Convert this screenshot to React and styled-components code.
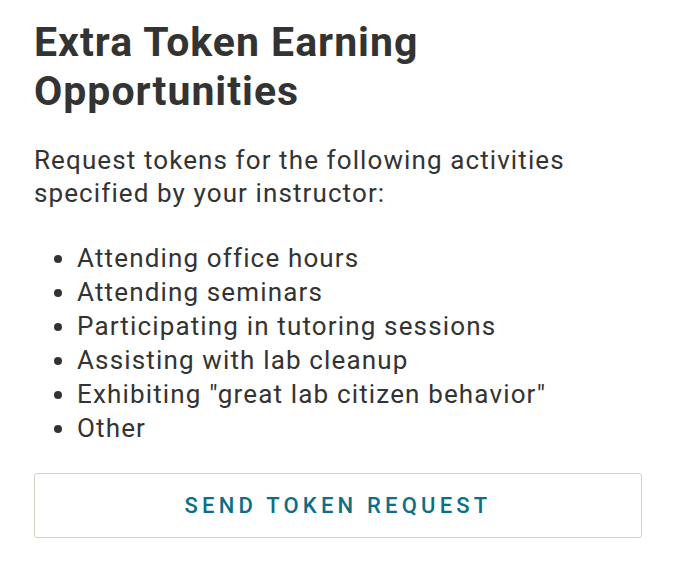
import React from "react"
import styled, { createGlobalStyle } from "styled-components"

const GlobalStyle = createGlobalStyle`
  body {
    margin: 0;
    background: #fff;
    font-family: Roboto, "Liberation Sans", sans-serif;
    color: #333;
  }
`

const Panel = styled.section`
  padding: 18px 34px 0 34px;
`

const Title = styled.h2`
  margin: 0;
  font-size: 41px;
  font-weight: 700;
  line-height: 49px;
  letter-spacing: 1px;
  color: #333;
`

const Intro = styled.p`
  margin: 28px 0 0 0;
  font-size: 26px;
  line-height: 33px;
  letter-spacing: 1.1px;
  font-weight: 400;
`

const List = styled.ul`
  margin: 31px 0 0 0;
  padding-left: 43px;
  font-size: 26px;
  line-height: 34px;
  letter-spacing: 1.15px;
`

const Item = styled.li`
  padding-left: 0;
`

const RequestButton = styled.button`
  display: block;
  width: 100%;
  height: 65px;
  margin-top: 28px;
  background: #fff;
  border: 1px solid #d3d3c4;
  border-radius: 3px;
  font-family: Roboto, "Liberation Sans", sans-serif;
  font-size: 22px;
  font-weight: 500;
  letter-spacing: 4.2px;
  color: #0d6f87;
  text-transform: uppercase;
  cursor: pointer;
`

const activities = [
  "Attending office hours",
  "Attending seminars",
  "Participating in tutoring sessions",
  "Assisting with lab cleanup",
  "Exhibiting \"great lab citizen behavior\"",
  "Other",
]

export default function App() {
  return (
    <>
      <GlobalStyle />
      <Panel>
        <Title>Extra Token Earning Opportunities</Title>
        <Intro>Request tokens for the following activities specified by your instructor:</Intro>
        <List>
          {activities.map(a => <Item key={a}>{a}</Item>)}
        </List>
        <RequestButton>Send Token Request</RequestButton>
      </Panel>
    </>
  )
}
